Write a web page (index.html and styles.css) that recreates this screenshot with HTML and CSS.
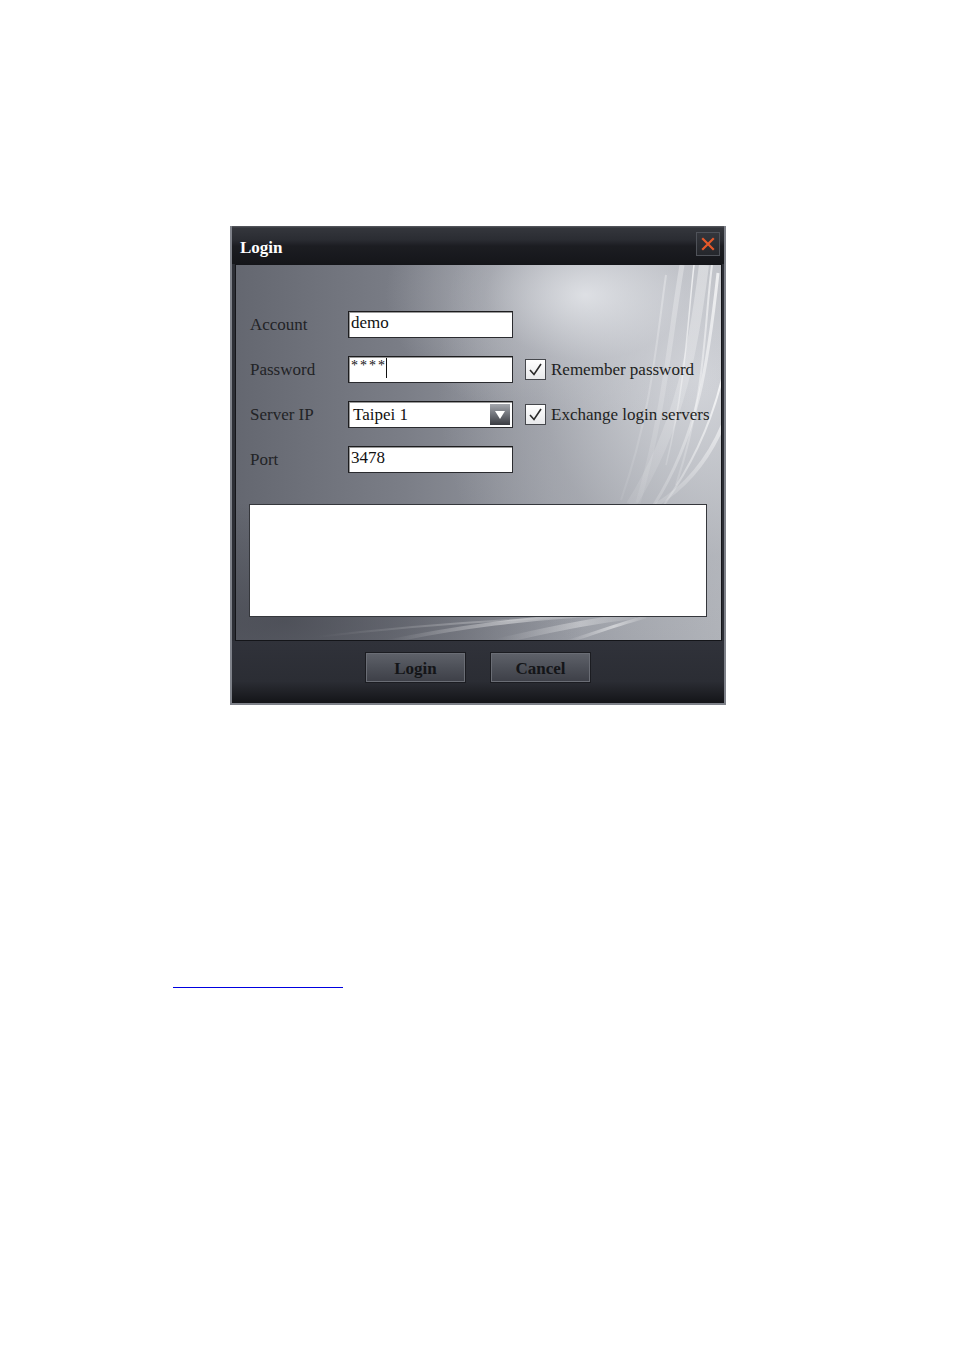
FILE: index.html
```html
<!DOCTYPE html>
<html>
<head>
<meta charset="utf-8">
<link rel="stylesheet" href="styles.css">
</head>
<body>
<div class="page">
  <div class="window">
    <div class="titlebar">
      <span class="title">Login</span>
      <div class="close">
        <svg width="14" height="14" viewBox="0 0 14 14"><path d="M2 2 L12 12 M12 2 L2 12" stroke="#e5582a" stroke-width="2.2" stroke-linecap="square"/></svg>
      </div>
    </div>
    <div class="panel">
      <svg class="streaks" width="487" height="377" viewBox="0 0 487 377">
        <defs>
          <linearGradient id="fadeV" x1="0" y1="0" x2="0" y2="1">
            <stop offset="0" stop-color="#fff" stop-opacity="0.9"/>
            <stop offset="1" stop-color="#fff" stop-opacity="0.2"/>
          </linearGradient>
          <linearGradient id="fadeH" x1="0" y1="0" x2="1" y2="0">
            <stop offset="0" stop-color="#fff" stop-opacity="0"/>
            <stop offset="0.6" stop-color="#fff" stop-opacity="0.7"/>
            <stop offset="1" stop-color="#fff" stop-opacity="0.1"/>
          </linearGradient>
        </defs>
        <g fill="none" stroke="url(#fadeV)">
          <path d="M468 0 C458 80 445 160 395 240" stroke-width="10" opacity="0.4"/>
          <path d="M482 8 C472 100 462 170 418 240" stroke-width="3" opacity="0.8"/>
          <path d="M446 0 C434 70 428 150 402 238" stroke-width="5" opacity="0.35"/>
          <path d="M487 110 C474 165 452 205 428 240" stroke-width="2" opacity="0.9"/>
          <path d="M476 0 C468 60 470 130 440 220" stroke-width="2" opacity="0.7"/>
          <path d="M430 10 C420 80 415 150 385 235" stroke-width="2" opacity="0.35"/>
          <path d="M487 160 C470 200 445 225 420 240" stroke-width="4" opacity="0.6"/>
          <path d="M458 0 C452 50 450 120 430 200" stroke-width="1.5" opacity="0.8"/>
        </g>
        <g fill="none" stroke="url(#fadeH)">
          <path d="M150 377 C220 362 300 352 360 350" stroke-width="4" opacity="0.6"/>
          <path d="M260 377 C310 365 360 355 400 351" stroke-width="6" opacity="0.5"/>
          <path d="M330 377 C360 368 385 358 410 352" stroke-width="3" opacity="0.7"/>
          <path d="M80 372 C180 360 280 354 340 352" stroke-width="2" opacity="0.35"/>
        </g>
      </svg>
      <div class="form">
        <span class="label">Account</span>
        <div class="field">demo</div>
        <span></span>

        <span class="label">Password</span>
        <div class="field pw">****<span class="caret"></span></div>
        <div class="option">
          <span class="check"><svg width="17" height="17" viewBox="0 0 17 17"><path d="M3 9 L7 13.5 L14 3" fill="none" stroke="#2a2a2a" stroke-width="1.6"/></svg></span>
          <span class="opt-text">Remember password</span>
        </div>

        <span class="label">Server IP</span>
        <div class="field select">
          <span class="sel-text">Taipei 1</span>
          <span class="arrow"><svg width="12" height="10" viewBox="0 0 12 10"><path d="M1 1 L11 1 L6 9 Z" fill="#fff"/></svg></span>
        </div>
        <div class="option">
          <span class="check"><svg width="17" height="17" viewBox="0 0 17 17"><path d="M3 9 L7 13.5 L14 3" fill="none" stroke="#2a2a2a" stroke-width="1.6"/></svg></span>
          <span class="opt-text">Exchange login servers</span>
        </div>

        <span class="label">Port</span>
        <div class="field">3478</div>
        <span></span>
      </div>
      <div class="log"></div>
    </div>
    <div class="footer">
      <button class="btn">Login</button>
      <button class="btn">Cancel</button>
    </div>
  </div>
  <div class="footnote-rule"></div>
</div>
</body>
</html>
```

FILE: styles.css
```css
html, body {
  margin: 0;
  padding: 0;
  background: #ffffff;
}

.page {
  padding-top: 226px;
  font-family: "Liberation Serif", "DejaVu Serif", serif;
}

.window {
  margin-left: 230px;
  width: 496px;
  height: 479px;
  box-sizing: border-box;
  border: 2px solid #7e8189;
  border-top: none;
  background: #2c2e35;
  display: flex;
  flex-direction: column;
}

.titlebar {
  height: 38px;
  flex: none;
  display: flex;
  align-items: flex-start;
  justify-content: space-between;
  background: linear-gradient(180deg, #5a5c62 0px, #34363c 2px, #2a2c32 14px, #1c1d22 20px, #15161a 38px);
  box-sizing: border-box;
}

.title {
  color: #ffffff;
  font-weight: bold;
  font-size: 17px;
  margin: 12px 0 0 8px;
}

.close {
  width: 24px;
  height: 24px;
  box-sizing: border-box;
  margin: 6px 4px 0 0;
  border: 1px solid #4f5259;
  background: linear-gradient(180deg, #34363c, #25272c);
  display: flex;
  align-items: center;
  justify-content: center;
}

.panel {
  position: relative;
  height: 377px;
  flex: none;
  box-sizing: border-box;
  margin: 0 2px 0 3px;
  border: 1px solid #141519;
  overflow: hidden;
  background:
    radial-gradient(ellipse 200px 130px at 72% 8%, rgba(230,232,236,0.85), rgba(200,202,208,0.4) 50%, rgba(180,183,190,0) 100%),
    radial-gradient(ellipse 260px 300px at 95% 30%, rgba(215,217,222,0.9), rgba(190,192,198,0.3) 60%, rgba(0,0,0,0) 100%),
    radial-gradient(ellipse 300px 120px at 10% 95%, rgba(60,62,70,0.6), rgba(60,62,70,0) 100%),
    linear-gradient(90deg, #646770 0%, #7b7e87 35%, #979aa2 65%, #aeb1b7 100%);
}

.streaks {
  position: absolute;
  left: 0;
  top: 0;
  pointer-events: none;
}

.form {
  position: relative;
  display: grid;
  grid-template-columns: 98px 165px auto;
  row-gap: 18px;
  align-items: center;
  padding: 46px 0 0 14px;
}

.label {
  font-size: 17px;
  color: #222326;
}

.field {
  height: 27px;
  box-sizing: border-box;
  background: #ffffff;
  border: 1px solid #2a2b2f;
  border-top-color: #1c1c1e;
  border-left-color: #1c1c1e;
  box-shadow: inset 1px 1px 0 #9a9a9a;
  font-size: 17px;
  color: #111;
  line-height: 22px;
  padding-left: 2px;
  display: flex;
  align-items: flex-start;
}

.pw {
  font-size: 14px;
  line-height: 18px;
  letter-spacing: 2px;
}

.caret {
  display: inline-block;
  width: 1px;
  height: 20px;
  background: #111;
  margin-top: 1px;
  margin-left: -1px;
}

.select {
  align-items: center;
  justify-content: space-between;
  padding-left: 4px;
  padding-right: 2px;
  line-height: 20px;
}

.sel-text {
  padding-top: 1px;
}

.arrow {
  width: 20px;
  height: 21px;
  background: linear-gradient(180deg, #a4a7ad 0%, #74777e 45%, #3a3c42 100%);
  display: flex;
  align-items: center;
  justify-content: center;
}

.option {
  display: flex;
  align-items: center;
  margin-left: 12px;
}

.check {
  width: 21px;
  height: 21px;
  box-sizing: border-box;
  border: 1px solid #45474c;
  background: linear-gradient(180deg, #ffffff, #e8e9eb);
  display: flex;
  align-items: center;
  justify-content: center;
}

.opt-text {
  margin-left: 5px;
  font-size: 17px;
  color: #1e1f22;
  white-space: nowrap;
}

.log {
  position: relative;
  margin: 31px 0 0 13px;
  width: 458px;
  height: 113px;
  box-sizing: border-box;
  background: #ffffff;
  border: 1px solid #35373c;
}

.footer {
  flex: 1;
  display: flex;
  justify-content: center;
  align-items: flex-start;
  gap: 24px;
  padding-top: 11px;
  box-sizing: border-box;
  background: linear-gradient(180deg, #30323a 0%, #2b2d34 65%, #1e1f24 85%, #131418 100%);
}

.btn {
  width: 101px;
  height: 31px;
  box-sizing: border-box;
  border: 1px solid #1b1c21;
  box-shadow: 0 0 0 1px #6a6d75 inset;
  outline: none;
  background: linear-gradient(180deg, #5f626a 0%, #4d5058 50%, #3d3f47 100%);
  color: #141518;
  font-family: "Liberation Serif", "DejaVu Serif", serif;
  font-weight: bold;
  font-size: 17px;
  padding: 3px 0 0 0;
  margin: 0;
}

.footnote-rule {
  margin: 282px 0 0 173px;
  width: 170px;
  height: 1px;
  background: #0000e0;
}
```
